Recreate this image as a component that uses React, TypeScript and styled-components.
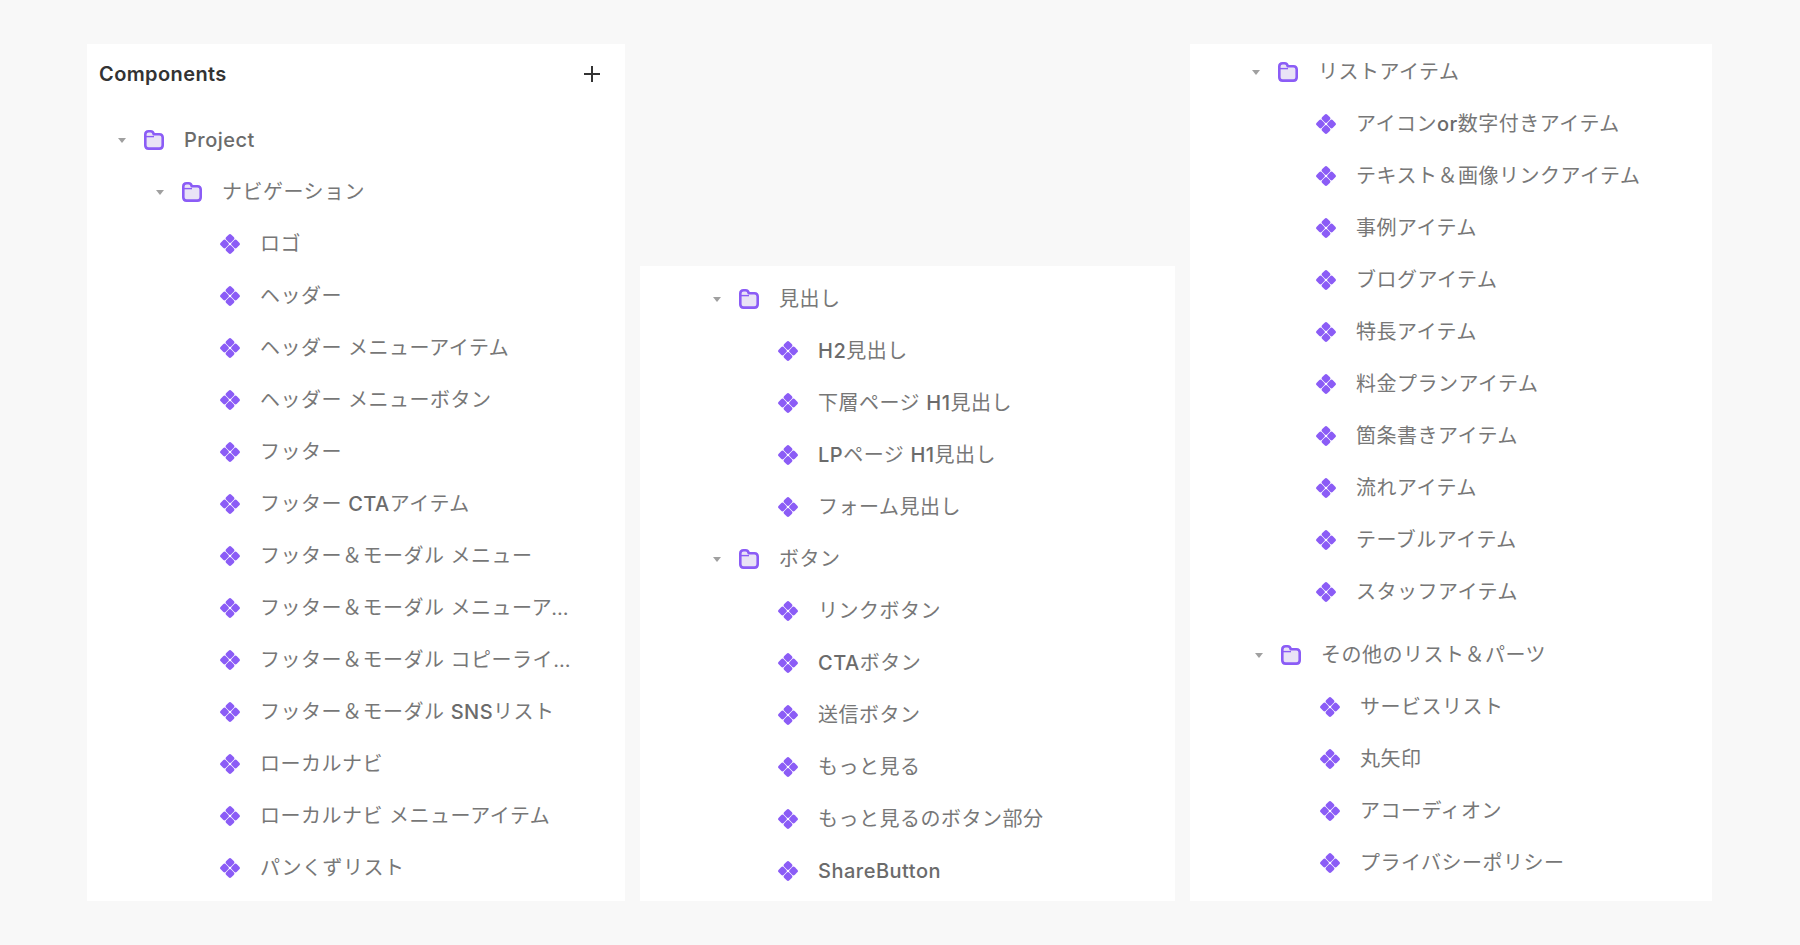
// App.tsx
import React from "react";
import styled, { createGlobalStyle } from "styled-components";

const GlobalStyle = createGlobalStyle`
  html, body {
    margin: 0;
    padding: 0;
    background-color: #f8f8f8;
  }
  body {
    font-family: Inter, "Noto Sans CJK JP", "Noto Sans", sans-serif;
  }
`;

const Page = styled.div`
  width: 1800px;
  height: 945px;
  box-sizing: border-box;
  padding: 44px 0 0 87px;

  display: flex;
  align-items: flex-start;
  gap: 15px;
`;

const Panel = styled.section<{ $width: number; $height: number; $top?: number }>`
  width: ${(p) => p.$width}px;
  height: ${(p) => p.$height}px;
  margin-top: ${(p) => p.$top ?? 0}px;
  box-sizing: border-box;
  padding-top: ${(p) => (p.$top ? 7 : 2)}px;

  background-color: #ffffff;
  overflow: hidden;
`;

const PanelHeader = styled.header`
  height: 68px;
  box-sizing: border-box;
  padding: 0 23px 12px 12px;

  display: flex;
  align-items: center;
  justify-content: space-between;
`;

const PanelTitle = styled.h2`
  margin: 0;

  color: #333333;
  font-size: 20px;
  font-weight: 600;
  letter-spacing: 0.4px;
`;

const AddButton = styled.button`
  width: 20px;
  height: 20px;
  padding: 0;

  background: none;
  border: none;
  color: #333333;

  display: flex;
  align-items: center;
  justify-content: center;
`;

const Row = styled.div<{ $indent: number; $gapAbove?: number }>`
  height: 52px;
  margin-top: ${(p) => p.$gapAbove ?? 0}px;
  padding-left: ${(p) => p.$indent}px;

  display: flex;
  align-items: center;
`;

const Caret = styled.span`
  width: 0;
  height: 0;
  margin-right: 18px;

  border-left: 4px solid transparent;
  border-right: 4px solid transparent;
  border-top: 5px solid #a0a0a0;
`;

const IconSlot = styled.span<{ $gap: number }>`
  width: 20px;
  height: 20px;
  margin-right: ${(p) => p.$gap}px;
  flex-shrink: 0;

  display: flex;
`;

const Label = styled.span<{ $maxWidth?: number }>`
  color: #777777;
  font-size: 20px;
  line-height: 28px;
  letter-spacing: 0.5px;
  white-space: nowrap;

  max-width: ${(p) => (p.$maxWidth ? `${p.$maxWidth}px` : "none")};
  overflow: hidden;
  text-overflow: ellipsis;
`;

const Latin = styled.span`
  color: #6b6b6b;
  font-weight: 500;
`;

const FolderIcon = () => (
  <svg width="20" height="20" viewBox="0 0 20 20" fill="none">
    <path
      d="M1.3 4.6C1.3 2.5 2.6 1.3 4.6 1.3H6.6C8.4 1.3 9.4 2.3 9.7 4.2H15.4C17.4 4.2 18.7 5.5 18.7 7.6V15.2C18.7 17.3 17.4 18.6 15.4 18.6H4.6C2.6 18.6 1.3 17.3 1.3 15.2V4.6Z"
      fill="#e9e3f6"
      stroke="#8b5cf6"
      strokeWidth="2.6"
      strokeLinejoin="round"
    />
    <path d="M1.5 6.6H10" stroke="#8b5cf6" strokeWidth="1.4" />
  </svg>
);

const ComponentIcon = () => (
  <svg width="20" height="20" viewBox="0.6 0.6 18.8 18.8" fill="#8b5cf6">
    <rect x="6.6" y="1.4" width="6.8" height="6.8" rx="1.8" transform="rotate(45 10 4.8)" />
    <rect x="6.6" y="11.8" width="6.8" height="6.8" rx="1.8" transform="rotate(45 10 15.2)" />
    <rect x="1.4" y="6.6" width="6.8" height="6.8" rx="1.8" transform="rotate(45 4.8 10)" />
    <rect x="11.8" y="6.6" width="6.8" height="6.8" rx="1.8" transform="rotate(45 15.2 10)" />
  </svg>
);

const PlusIcon = () => (
  <svg width="18" height="18" viewBox="0 0 18 18" fill="none">
    <path d="M9 1V17M1 9H17" stroke="currentColor" strokeWidth="2" />
  </svg>
);

// latin runs are a bit heavier than the japanese ones in the original
const renderLabel = (text: string) =>
  text
    .split(/([A-Za-z0-9]+)/)
    .map((part, i) => (i % 2 === 1 ? <Latin key={i}>{part}</Latin> : part));

const FolderRow = ({
  indent,
  label,
  gapAbove,
}: {
  indent: number;
  label: string;
  gapAbove?: number;
}) => (
  <Row $indent={indent} $gapAbove={gapAbove}>
    <Caret />
    <IconSlot $gap={20}>
      <FolderIcon />
    </IconSlot>
    <Label>{renderLabel(label)}</Label>
  </Row>
);

const ComponentRow = ({ indent, label }: { indent: number; label: string }) => (
  <Row $indent={indent}>
    <IconSlot $gap={20}>
      <ComponentIcon />
    </IconSlot>
    <Label $maxWidth={311}>{renderLabel(label)}</Label>
  </Row>
);

const navigationItems = [
  "ロゴ",
  "ヘッダー",
  "ヘッダー メニューアイテム",
  "ヘッダー メニューボタン",
  "フッター",
  "フッター CTAアイテム",
  "フッター＆モーダル メニュー",
  "フッター＆モーダル メニューアイテム",
  "フッター＆モーダル コピーライト",
  "フッター＆モーダル SNSリスト",
  "ローカルナビ",
  "ローカルナビ メニューアイテム",
  "パンくずリスト",
];

const headingItems = ["H2見出し", "下層ページ H1見出し", "LPページ H1見出し", "フォーム見出し"];

const buttonItems = ["リンクボタン", "CTAボタン", "送信ボタン", "もっと見る", "もっと見るのボタン部分", "ShareButton"];

const listItems = [
  "アイコンor数字付きアイテム",
  "テキスト＆画像リンクアイテム",
  "事例アイテム",
  "ブログアイテム",
  "特長アイテム",
  "料金プランアイテム",
  "箇条書きアイテム",
  "流れアイテム",
  "テーブルアイテム",
  "スタッフアイテム",
];

const otherItems = ["サービスリスト", "丸矢印", "アコーディオン", "プライバシーポリシー"];

export default function App() {
  return (
    <>
      <GlobalStyle />
      <Page>
        <Panel $width={538} $height={857}>
          <PanelHeader>
            <PanelTitle>Components</PanelTitle>
            <AddButton>
              <PlusIcon />
            </AddButton>
          </PanelHeader>
          <FolderRow indent={31} label="Project" />
          <FolderRow indent={69} label="ナビゲーション" />
          {navigationItems.map((item) => (
            <ComponentRow key={item} indent={133} label={item} />
          ))}
        </Panel>

        <Panel $width={535} $height={635} $top={222}>
          <FolderRow indent={73} label="見出し" />
          {headingItems.map((item) => (
            <ComponentRow key={item} indent={138} label={item} />
          ))}
          <FolderRow indent={73} label="ボタン" />
          {buttonItems.map((item) => (
            <ComponentRow key={item} indent={138} label={item} />
          ))}
        </Panel>

        <Panel $width={522} $height={857}>
          <FolderRow indent={62} label="リストアイテム" />
          {listItems.map((item) => (
            <ComponentRow key={item} indent={126} label={item} />
          ))}
          <FolderRow indent={65} label="その他のリスト＆パーツ" gapAbove={11} />
          {otherItems.map((item) => (
            <ComponentRow key={item} indent={130} label={item} />
          ))}
        </Panel>
      </Page>
    </>
  );
}
